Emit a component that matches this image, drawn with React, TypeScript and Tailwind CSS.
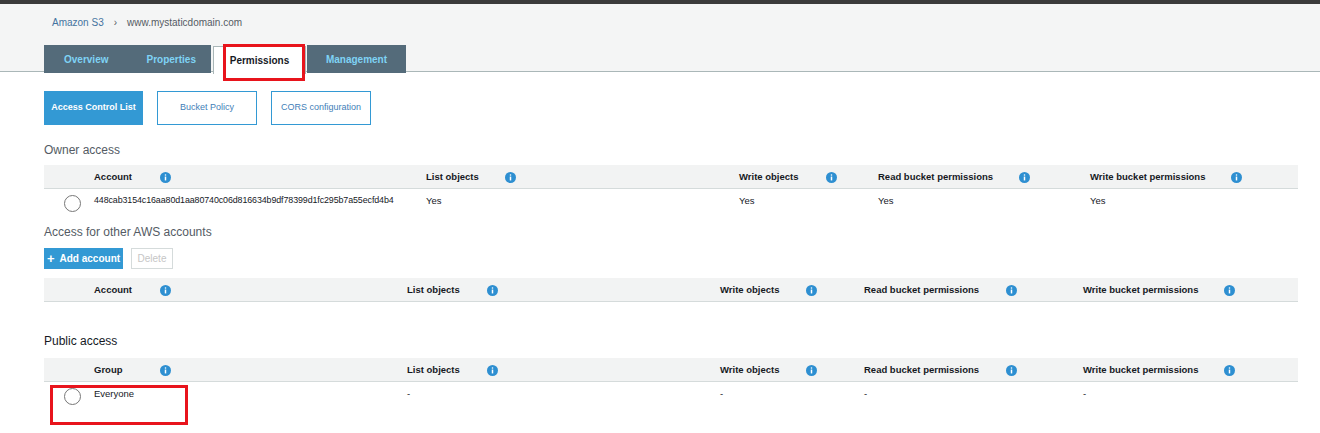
import React from "react";

const font = { fontFamily: '"Liberation Sans", Arial, sans-serif' };

function Info() {
  return (
    <svg width="11" height="11" viewBox="0 0 12 12" className="inline-block">
      <circle cx="6" cy="6" r="6" fill="#2e8fd1" />
      <rect x="5.2" y="5" width="1.6" height="4.2" fill="#fff" />
      <circle cx="6" cy="3.3" r="0.9" fill="#fff" />
    </svg>
  );
}

type Col = { label: string; left: number; icon: number };

function Table({ cols, rows, first }: { cols: Col[]; rows: string[][]; first: string }) {
  const all = [{ label: first, left: 94, icon: 160 }, ...cols];
  return (
    <div className="ml-11 mr-[22px]">
      <div className="relative h-6 bg-[#f2f3f3] border-b border-[#d5dbdb] text-[9.5px] font-bold text-[#16191f]">
        {all.map((c) => (
          <React.Fragment key={c.label}>
            <span className="absolute top-[5px]" style={{ left: c.left - 44 }}>{c.label}</span>
            <span className="absolute top-[5px]" style={{ left: c.icon - 44 }}><Info /></span>
          </React.Fragment>
        ))}
      </div>
      {rows.map((r, i) => (
        <div key={i} className="relative h-[36px] text-[9.5px] text-[#16191f]">
          <span className="absolute left-[20px] top-[6px] h-[17px] w-[17px] rounded-full border border-[#777] bg-white" />
          {r.map((v, j) => (
            <span key={j} className={`absolute top-[5px] ${j === 0 && v.length > 20 ? "text-[8.9px] tracking-[-0.1px]" : ""}`} style={{ left: all[j].left - 44 }}>{v}</span>
          ))}
        </div>
      ))}
    </div>
  );
}

export default function App() {
  const owner: Col[] = [
    { label: "List objects", left: 426, icon: 505 },
    { label: "Write objects", left: 739, icon: 826 },
    { label: "Read bucket permissions", left: 878, icon: 1019 },
    { label: "Write bucket permissions", left: 1090, icon: 1231 },
  ];
  const other: Col[] = [
    { label: "List objects", left: 407, icon: 487 },
    { label: "Write objects", left: 720, icon: 806 },
    { label: "Read bucket permissions", left: 864, icon: 1006 },
    { label: "Write bucket permissions", left: 1083, icon: 1224 },
  ];
  return (
    <div className="relative h-[433px] w-[1320px] overflow-hidden bg-white" style={font}>
      <div className="h-[4px] bg-[#3b3b3b]" />
      <div className="h-[68px] bg-[#f4f5f5] border-b border-[#aab7b8] relative">
        <div className="pl-[52px] pt-[11px] text-[10px] text-[#545b64]">
          <span className="text-[#44739f]">Amazon S3</span>
          <span className="mx-[10px]">›</span>
          <span>www.mystaticdomain.com</span>
        </div>
        <div className="absolute left-[44px] top-[41px] flex items-end text-[10px] font-bold">
          <div className="flex h-[28px] w-[167px] items-center bg-[#546b7a] text-[#7fd3f5]">
            <span className="ml-[20px]">Overview</span>
            <span className="ml-[38px]">Properties</span>
          </div>
          <div className="ml-[2px] flex h-[28px] w-[93px] items-center justify-center border border-b-0 border-[#aab7b8] bg-white text-[#16191f] translate-y-[1px]">
            Permissions
          </div>
          <div className="ml-[1px] flex h-[28px] w-[99px] items-center justify-center bg-[#546b7a] text-[#7fd3f5]">
            Management
          </div>
        </div>
      </div>
      <div className="ml-11 mt-[19px] flex gap-[14px] text-[9px]">
        <div className="flex h-[34px] w-[99px] items-center justify-center bg-[#3399d4] font-bold text-white">Access Control List</div>
        <div className="flex h-[34px] w-[100px] items-center justify-center border border-[#3399d4] text-[#3f80b8]">Bucket Policy</div>
        <div className="flex h-[34px] w-[100px] items-center justify-center border border-[#3399d4] text-[#3f80b8]">CORS configuration</div>
      </div>
      <div className="ml-11 mt-[16px] mb-[6px] text-[12px] text-[#545b64]">Owner access</div>
      <Table first="Account" cols={owner} rows={[["448cab3154c16aa80d1aa80740c06d816634b9df78399d1fc295b7a55ecfd4b4", "Yes", "Yes", "Yes", "Yes"]]} />
      <div className="ml-11 -mt-[2px] text-[12px] text-[#545b64]">Access for other AWS accounts</div>
      <div className="ml-11 mt-[7px] flex gap-[8px] text-[10px]">
        <div className="flex h-[21px] w-[79px] items-center justify-center gap-[5px] bg-[#3399d4] font-bold text-white"><span className="text-[13px] leading-none">+</span>Add account</div>
        <div className="flex h-[21px] w-[42px] items-center justify-center border border-[#d5dbdb] text-[#c6c6c6]">Delete</div>
      </div>
      <div className="mt-[9px]"><Table first="Account" cols={other} rows={[]} /></div>
      <div className="ml-11 mt-[30px] mb-[8px] text-[12px] text-[#16191f]">Public access</div>
      <Table first="Group" cols={other} rows={[["Everyone", "-", "-", "-", "-"]]} />
      <div className="absolute left-[223px] top-[44px] h-[37px] w-[82px] border-[3px] border-[#e8141c]" />
      <div className="absolute left-[50px] top-[385px] h-[40px] w-[138px] border-[3px] border-[#e8141c]" />
    </div>
  );
}
